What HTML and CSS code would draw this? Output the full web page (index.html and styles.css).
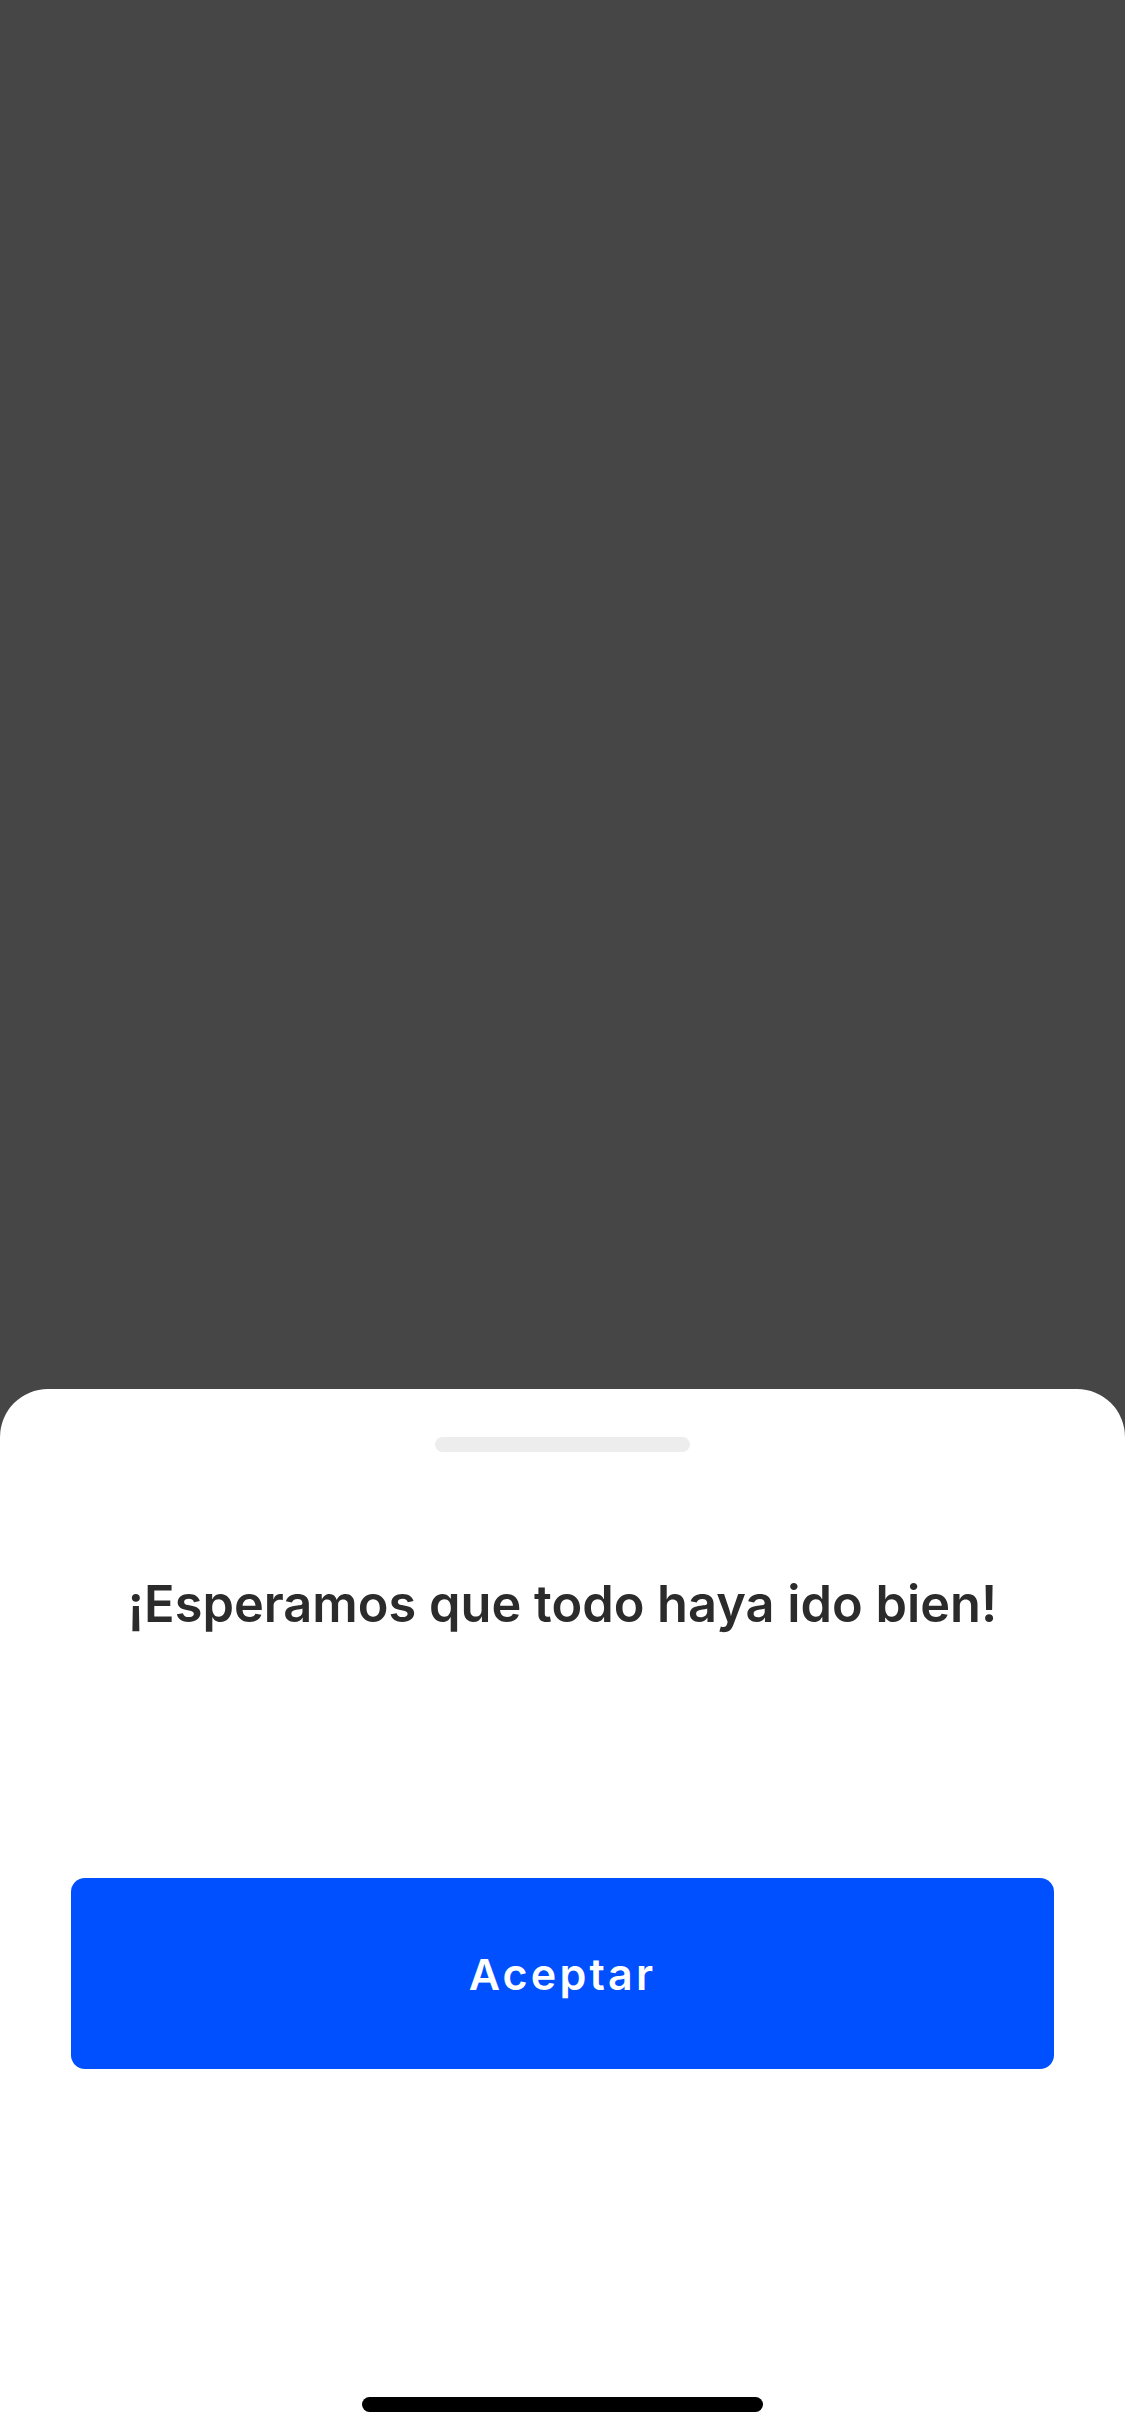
FILE: index.html
```html
<!DOCTYPE html>
<html lang="es">
<head>
<meta charset="utf-8">
<link rel="stylesheet" href="styles.css">
</head>
<body>
<div class="screen">
  <div class="overlay"></div>
  <div class="sheet">
    <div class="handle"></div>
    <h1 class="title">¡Esperamos que todo haya ido bien!</h1>
    <button class="accept">Aceptar</button>
    <div class="spacer"></div>
    <div class="home"></div>
  </div>
</div>
</body>
</html>
```
FILE: styles.css
```css
html, body {
  margin: 0;
  padding: 0;
}
body {
  width: 1125px;
  height: 2436px;
  overflow: hidden;
  background: #464646;
  font-family: "Inter", "Liberation Sans", sans-serif;
}
.screen {
  display: flex;
  flex-direction: column;
  height: 2436px;
}
.overlay {
  flex: 0 0 1389px;
  background: #464646;
}
.sheet {
  flex: 1;
  background: #ffffff;
  border-radius: 48px 48px 0 0;
  display: flex;
  flex-direction: column;
  align-items: center;
  padding-top: 48px;
  box-sizing: border-box;
}
.handle {
  width: 255px;
  height: 15px;
  border-radius: 8px;
  background: #ededed;
}
.title {
  margin: 120px 0 0 0;
  font-size: 50.5px;
  line-height: 64px;
  font-weight: 600;
  color: #2b2b2b;
  text-align: center;
}
.accept {
  margin-top: 242px;
  width: 983px;
  height: 191px;
  border: none;
  border-radius: 14px;
  background: #0050ff;
  color: #ffffff;
  font-family: "Inter", "Liberation Sans", sans-serif;
  font-size: 43px;
  font-weight: 600;
  letter-spacing: 3.2px;
}
.spacer {
  flex: 1;
}
.home {
  width: 401px;
  height: 15px;
  border-radius: 8px;
  background: #000000;
  margin-bottom: 24px;
}
```
